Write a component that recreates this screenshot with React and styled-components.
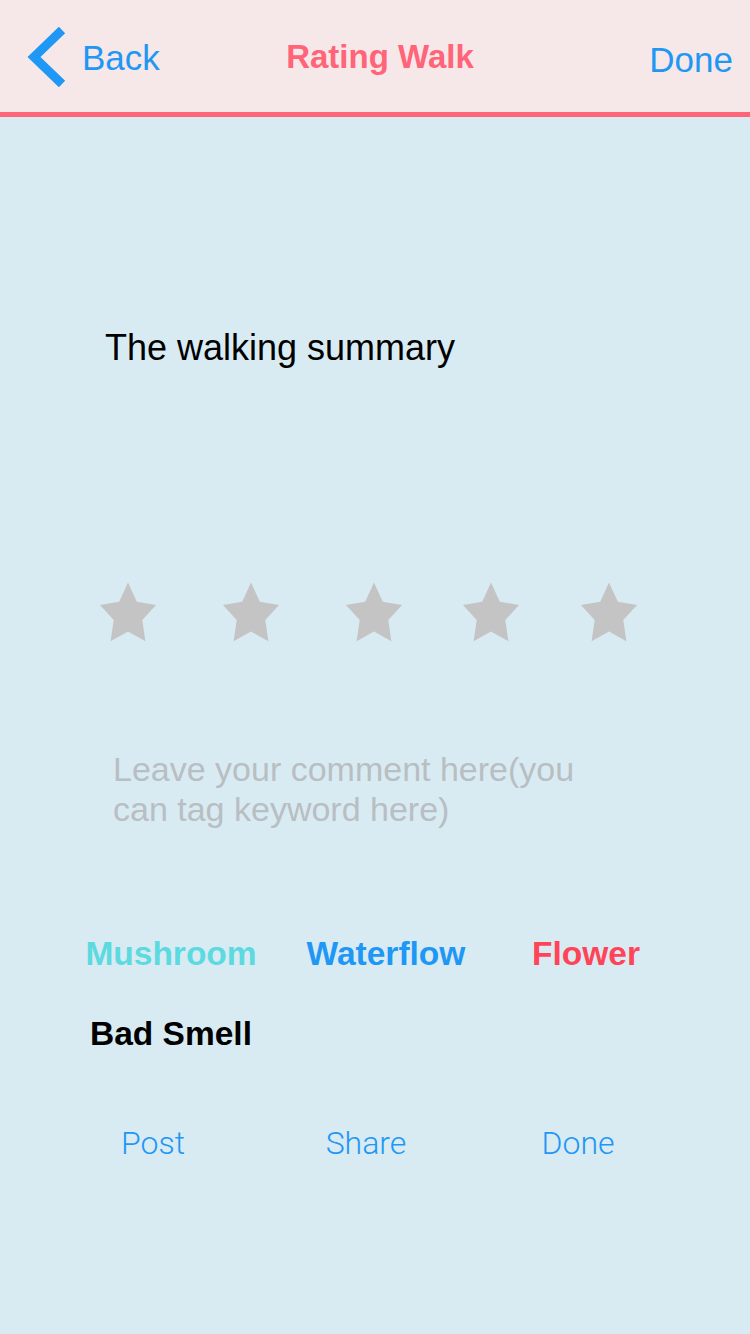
import styled, { createGlobalStyle } from "styled-components";

const GlobalStyle = createGlobalStyle`
  html, body {
    margin: 0;
    padding: 0;
    background: #d8ebf3;
  }
  body {
    font-family: "Liberation Sans", Arial, sans-serif;
  }
`;

const tags = [
  { label: "Mushroom", color: "#5cdae0" },
  { label: "Waterflow", color: "#1f97f4" },
  { label: "Flower", color: "#ff4458" },
  { label: "Bad Smell", color: "#000000" },
];

// five-point star, fairly "fat" inner radius like the iOS rating control
const starPoints = (() => {
  const pts = [];
  const cx = 30;
  const cy = 33;
  for (let i = 0; i < 10; i++) {
    const r = i % 2 === 0 ? 32.5 : 16.5;
    const a = (Math.PI / 5) * i;
    pts.push(`${(cx + r * Math.sin(a) * 0.91).toFixed(1)},${(cy - r * Math.cos(a)).toFixed(1)}`);
  }
  return pts.join(" ");
})();

const Star = () => (
  <svg width="60" height="62" viewBox="0 0 60 62">
    <polygon points={starPoints} fill="#c4c4c4" />
  </svg>
);

const App = () => {
  return (
    <Page>
      <GlobalStyle />
      <NavBar>
        <BackButton>
          <svg width="40" height="60" viewBox="0 0 40 60">
            <polyline
              points="35,3 7,30 35,57"
              fill="none"
              stroke="#1f97f4"
              strokeWidth="9"
              strokeLinejoin="miter"
            />
          </svg>
          <NavText>Back</NavText>
        </BackButton>
        <Title>Rating Walk</Title>
        <DoneLink>Done</DoneLink>
      </NavBar>

      <Content>
        <Summary>The walking summary</Summary>

        <Stars>
          {[0, 1, 2, 3, 4].map((i) => (
            <StarCell key={i}>
              <Star />
            </StarCell>
          ))}
        </Stars>

        <Comment>
          Leave your comment here(you
          <br />
          can tag keyword here)
        </Comment>

        <TagGrid>
          {tags.map((t) => (
            <Tag key={t.label} $color={t.color}>
              {t.label}
            </Tag>
          ))}
        </TagGrid>

        <Actions>
          <ActionButton>Post</ActionButton>
          <ActionButton>Share</ActionButton>
          <ActionButton>Done</ActionButton>
        </Actions>
      </Content>
    </Page>
  );
};

export default App;

const Page = styled.div`
  width: 750px;
  min-height: 1334px;
  background: #d8ebf3;
`;

const NavBar = styled.header`
  height: 117px;
  box-sizing: border-box;
  padding: 6px 17px 0 27px;
  display: grid;
  grid-template-columns: 1fr auto 1fr;
  align-items: center;
  background: #f6e8e9;
  border-bottom: 5px solid #ff6478;
`;

const BackButton = styled.div`
  display: flex;
  align-items: center;
  gap: 15px;
  margin-top: -2px;

  svg {
    margin-top: -2px;
  }
`;

const NavText = styled.span`
  font-size: 35px;
  color: #1f97f4;
  line-height: 40px;
`;

const DoneLink = styled(NavText)`
  justify-self: end;
  margin-top: 2px;
`;

const Title = styled.span`
  font-size: 33px;
  font-weight: 700;
  color: #ff6478;
  line-height: 40px;
  margin-top: -4px;
`;

const Content = styled.main`
  display: flex;
  flex-direction: column;
`;

const Summary = styled.div`
  margin: 206px 0 0 105px;
  font-size: 36px;
  line-height: 50px;
  color: #000;
`;

const Stars = styled.div`
  display: grid;
  grid-template-columns: 122px 124px 122px 112px 124px;
  margin: 209px 0 0 67px;
`;

const StarCell = styled.div`
  display: flex;
  justify-content: center;
`;

const Comment = styled.div`
  margin: 105px 0 0 113px;
  font-size: 34px;
  line-height: 40px;
  color: #b8bec2;
`;

const TagGrid = styled.div`
  display: grid;
  grid-template-columns: 214px 216px 184px;
  row-gap: 40px;
  margin: 105px 0 0 64px;
`;

const Tag = styled.div`
  text-align: center;
  font-size: 33.5px;
  font-weight: 700;
  line-height: 40px;
  color: ${(p) => p.$color};
`;

const Actions = styled.div`
  display: grid;
  grid-template-columns: 214px 212px 212px;
  margin: 69px 0 0 46px;
`;

const ActionButton = styled.div`
  text-align: center;
  font-family: Roboto, "Liberation Sans", sans-serif;
  font-weight: 300;
  font-size: 32px;
  line-height: 40px;
  color: #1f97f4;
`;
